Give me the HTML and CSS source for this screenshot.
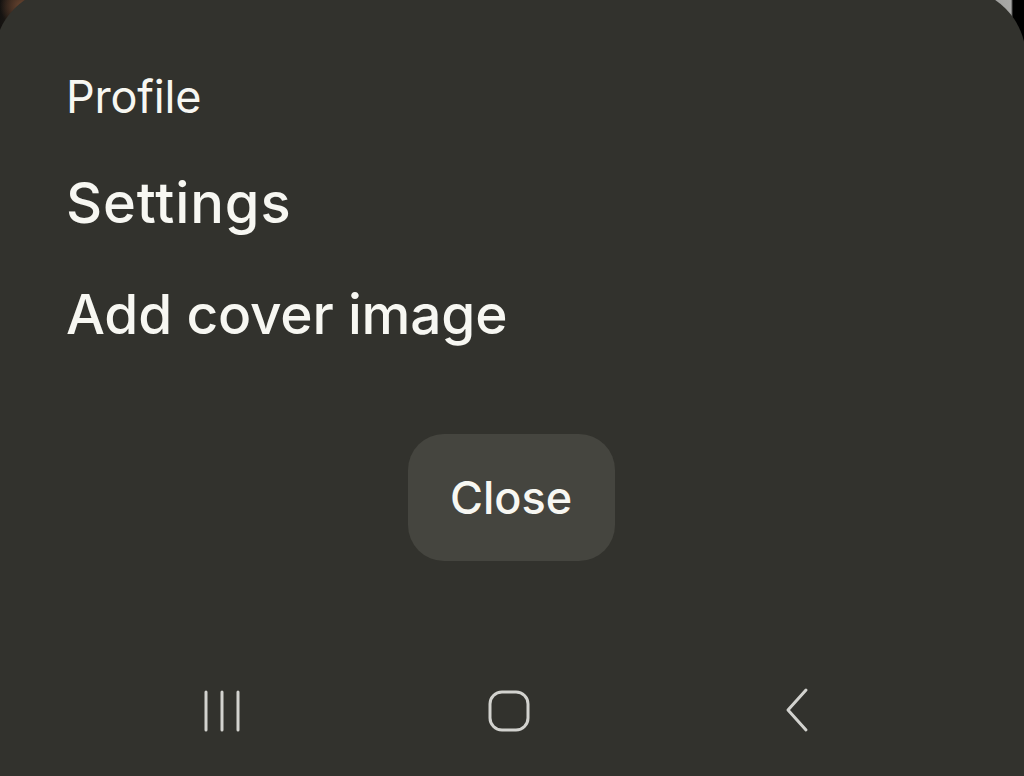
FILE: index.html
```html
<!DOCTYPE html>
<html lang="en">
<head>
    <meta charset="UTF-8">
    <meta name="viewport" content="width=device-width, initial-scale=1.0">
    <title>Menu</title>
    <link rel="stylesheet" href="styles.css">
</head>
<body>
    <div class="sheet">
        <ul class="menu">
            <li class="menu-item small">Profile</li>
            <li class="menu-item wide">Settings</li>
            <li class="menu-item">Add cover image</li>
        </ul>

        <div class="actions">
            <button class="close-button">Close</button>
        </div>

        <!-- system navigation bar -->
        <nav class="nav-bar">
            <div class="nav-cell">
                <svg width="40" height="42" viewBox="0 0 40 42">
                    <path d="M5 2 V40 M21 2 V40 M37 2 V40" stroke="#d2d2ce" stroke-width="3" stroke-linecap="round" fill="none"/>
                </svg>
            </div>
            <div class="nav-cell">
                <svg width="44" height="44" viewBox="0 0 44 44">
                    <rect x="3" y="3" width="38" height="38" rx="12" stroke="#d2d2ce" stroke-width="3" fill="none"/>
                </svg>
            </div>
            <div class="nav-cell">
                <svg width="30" height="48" viewBox="0 0 30 48">
                    <path d="M24 3 L6 23 L24 43" stroke="#d2d2ce" stroke-width="3" stroke-linecap="round" stroke-linejoin="round" fill="none"/>
                </svg>
            </div>
        </nav>
    </div>
</body>
</html>
```

FILE: styles.css
```css
body {
    margin: 0;
    padding: 0;
    height: 776px;
    overflow: hidden;
    font-family: Inter, "Noto Sans", sans-serif;
    background:
        radial-gradient(circle at 22px 6px, #6b4630 0, #4a3224 10px, rgba(40, 30, 24, 0) 22px),
        linear-gradient(90deg, #141210 0, #1c1814 8px, #2e2a25 40px, #333 500px, #9d9d9b 985px, #a9a9a7 1011px, #000 1013px);
}

.sheet {
    margin: -12px -2px 0 -6px;
    height: 800px;
    background-color: #32322d;
    border-radius: 70px 70px 0 0;
    color: #f7f7f2;
    display: flex;
    flex-direction: column;
}

.menu {
    list-style: none;
    margin: 0;
    padding: 79px 0 0 72px;
    display: flex;
    flex-direction: column;
    gap: 41px;
}

.menu-item {
    font-size: 55px;
    font-weight: 500;
    line-height: 70px;
    letter-spacing: -0.2px;
}

.menu-item.small {
    font-size: 45px;
    font-weight: 400;
    line-height: 60px;
}

.menu-item.wide {
    font-size: 56px;
    letter-spacing: 0.9px;
}

.actions {
    display: flex;
    justify-content: center;
    padding: 85px 0 0 2px;
}

.close-button {
    width: 207px;
    height: 127px;
    border: none;
    border-radius: 36px;
    background-color: #45453f;
    color: #f7f7f2;
    font-family: Inter, "Noto Sans", sans-serif;
    font-size: 45px;
    font-weight: 500;
    cursor: pointer;
}

.nav-bar {
    display: flex;
    padding: 120px 0 0 83px;
}

.nav-cell {
    width: 288px;
    height: 60px;
    display: flex;
    align-items: center;
    justify-content: center;
}
```
